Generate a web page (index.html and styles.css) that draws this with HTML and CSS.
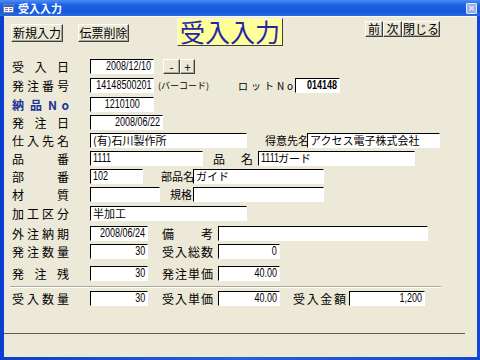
FILE: index.html
```html
<!DOCTYPE html>
<html lang="ja">

<head>
    <meta charset="UTF-8">
    <title>受入入力</title>
    <link rel="stylesheet" href="styles.css">
</head>

<body>
    <div class="window">
        <!-- タイトルバー -->
        <div class="caption">
            <svg class="caption-icon" width="11" height="9" viewBox="0 0 11 9">
                <rect x="0.5" y="0.5" width="10" height="8" fill="#fff" stroke="#6b7fa8"/>
                <rect x="1" y="1" width="9" height="2" fill="#3b64c8"/>
                <rect x="2" y="4" width="3" height="1" fill="#6b7fa8"/>
                <rect x="6" y="4" width="3" height="1" fill="#6b7fa8"/>
                <rect x="2" y="6" width="3" height="1" fill="#6b7fa8"/>
                <rect x="6" y="6" width="3" height="1" fill="#6b7fa8"/>
            </svg>
            <span class="caption-text">受入入力</span>
            <span class="caption-close">×</span>
        </div>

        <div class="client">
            <div class="head">
                <button class="btn btn-new">新規入力</button>
                <button class="btn btn-del">伝票削除</button>
                <div class="form-title">受入入力</div>
                <div class="nav">
                    <button class="btn nav-prev">前</button>
                    <button class="btn nav-next">次</button>
                    <button class="btn nav-close">閉じる</button>
                </div>
            </div>

            <div class="rows">
                <div class="row first">
                    <span class="lbl">受入日</span>
                    <span class="fld right w64"><span class="num">2008/12/10</span></span>
                    <button class="btn step minus">-</button>
                    <button class="btn step plus">+</button>
                </div>
                <div class="row loose">
                    <span class="lbl">発注番号</span>
                    <span class="fld right w64"><span class="num">14148500201</span></span>
                    <span class="note">(バーコード)</span>
                    <span class="lbl lot">ロ ッ ト N o</span>
                    <span class="fld right bold lot-no"><span class="num">014148</span></span>
                </div>
                <div class="row loose">
                    <span class="lbl blue">納 品 N o</span>
                    <span class="fld center w64"><span class="num">1210100</span></span>
                </div>
                <div class="row">
                    <span class="lbl">発注日</span>
                    <span class="fld right w73"><span class="num">2008/06/22</span></span>
                </div>
                <div class="row">
                    <span class="lbl">仕入先名</span>
                    <span class="fld w157">(有)石川製作所</span>
                    <span class="lbl2 customer">得意先名</span>
                    <span class="fld w133">アクセス電子株式会社</span>
                </div>
                <div class="row">
                    <span class="lbl">品番</span>
                    <span class="fld w113"><span class="num">1111</span></span>
                    <span class="lbl hinmei">品名</span>
                    <span class="fld w157"><span class="num pre">1111</span>ガード</span>
                </div>
                <div class="row">
                    <span class="lbl">部番</span>
                    <span class="fld w53"><span class="num">102</span></span>
                    <span class="lbl2 buhin">部品名</span>
                    <span class="fld w131">ガイド</span>
                </div>
                <div class="row">
                    <span class="lbl">材質</span>
                    <span class="fld w70"></span>
                    <span class="lbl2 kikaku">規格</span>
                    <span class="fld w131"></span>
                </div>
                <div class="row loose">
                    <span class="lbl">加工区分</span>
                    <span class="fld w157">半加工</span>
                </div>
                <div class="row looser">
                    <span class="lbl">外注納期</span>
                    <span class="fld right w58"><span class="num">2008/06/24</span></span>
                    <span class="lbl mid">備考</span>
                    <span class="fld w210"></span>
                </div>
                <div class="row">
                    <span class="lbl">発注数量</span>
                    <span class="fld right w58"><span class="num">30</span></span>
                    <span class="lbl mid">受入総数</span>
                    <span class="fld right w62"><span class="num">0</span></span>
                </div>
                <div class="row wide">
                    <span class="lbl">発注残</span>
                    <span class="fld right w58"><span class="num">30</span></span>
                    <span class="lbl mid">発注単価</span>
                    <span class="fld right w62"><span class="num">40.00</span></span>
                </div>

                <div class="sep"></div>

                <div class="row after-sep">
                    <span class="lbl">受入数量</span>
                    <span class="fld right w58"><span class="num">30</span></span>
                    <span class="lbl mid">受入単価</span>
                    <span class="fld right w62"><span class="num">40.00</span></span>
                    <span class="lbl amount">受入金額</span>
                    <span class="fld right w76"><span class="num">1,200</span></span>
                </div>
            </div>

            <div class="status"></div>
        </div>
    </div>
</body>

</html>
```

FILE: styles.css
```css
body {
    margin: 0;
    background-color: #fff;
    font-family: "Noto Sans CJK JP", sans-serif;
    font-size: 12px;
    color: #000;
}

.window {
    width: 480px;
    height: 360px;
    display: flex;
    flex-direction: column;
    background: linear-gradient(to right, #0b3fd0, #2160e0 50%, #1147d4);
}

/* タイトルバー */
.caption {
    height: 16px;
    display: flex;
    align-items: center;
    padding: 0 3px;
    background: linear-gradient(#4d8df5, #1f62e4 30%, #1658de 70%, #2a67e2);
    color: #fff;
}

.caption-icon {
    display: block;
}

.caption-text {
    margin-left: 4px;
    font-size: 11px;
    font-weight: bold;
    line-height: 16px;
}

.caption-close {
    margin-left: auto;
    width: 9px;
    height: 9px;
    border: 1px solid #dfe6f7;
    border-radius: 1px;
    background-color: #9db0e4;
    color: #fff;
    font-family: "DejaVu Sans", sans-serif;
    font-size: 9px;
    line-height: 9px;
    text-align: center;
}

.client {
    flex: 1;
    margin: 0 3px 3px 4px;
    display: flex;
    flex-direction: column;
    background-color: #ece9d8;
    border-top: 1px solid #fbfaf6;
}

/* ボタン */
.btn {
    box-sizing: border-box;
    padding: 0;
    background-color: #ece9d8;
    border: 1px solid;
    border-color: #fff #404040 #404040 #fff;
    box-shadow: inset -1px -1px #aca899;
    font-family: "Noto Sans CJK JP", sans-serif;
    font-size: 12px;
    color: #000;
    line-height: 14px;
}

.head {
    height: 34px;
    display: flex;
    align-items: flex-start;
}

.btn-new {
    width: 52px;
    height: 18px;
    margin: 7px 0 0 7px;
}

.btn-del {
    width: 51px;
    height: 18px;
    margin: 7px 0 0 15px;
}

.form-title {
    box-sizing: border-box;
    width: 106px;
    height: 28px;
    margin: 1px 0 0 48px;
    background-color: #ffff99;
    border: 1px solid;
    border-color: #f4f4f4 #404040 #404040 #f4f4f4;
    color: #2326ad;
    font-size: 25px;
    line-height: 25px;
    text-align: center;
    white-space: nowrap;
}

.nav {
    display: flex;
    margin: 4px 0 0 82px;
}

.nav .btn {
    height: 16px;
}

.nav-prev {
    width: 18px;
}

.nav-next {
    width: 19px;
}

.nav-close {
    width: 38px;
}

/* 入力行 */
.rows {
    padding-left: 8px;
}

.row {
    display: flex;
    align-items: center;
    height: 15px;
    margin-top: 3px;
}

.row.first {
    margin-top: 8px;
}

.row.loose {
    margin-top: 4px;
}

.row.looser {
    margin-top: 5px;
}

.row.wide {
    margin-top: 7px;
}

.row.after-sep {
    margin-top: 3px;
}

.lbl {
    width: 57px;
    margin-right: 21px;
    text-align: justify;
    text-align-last: justify;
    line-height: 15px;
    white-space: nowrap;
}

.lbl.blue {
    color: #1c3599;
    font-weight: bold;
}

.lbl.lot {
    width: 55px;
    margin-right: 2px;
    font-size: 10px;
}

.lbl.hinmei {
    width: 40px;
    margin: 0 5px 0 10px;
}

.lbl.mid {
    width: 51px;
    margin: 0 5px 0 14px;
}

.lbl.amount {
    width: 53px;
    margin: 0 3px 0 13px;
}

.lbl2 {
    font-size: 11px;
    line-height: 15px;
    white-space: nowrap;
    text-align: right;
}

.customer {
    width: 41px;
    margin: 0 1px 0 18px;
}

.buhin {
    width: 31px;
    margin: 0 1px 0 18px;
}

.kikaku {
    width: 22px;
    margin: 0 1px 0 10px;
}

.note {
    width: 80px;
    margin-left: 4px;
    font-size: 9px;
    line-height: 15px;
    white-space: nowrap;
}

/* テキストボックス */
.fld {
    display: flex;
    align-items: center;
    box-sizing: border-box;
    height: 15px;
    padding: 0 2px;
    overflow: hidden;
    background-color: #fff;
    border: 1px solid;
    border-color: #000 #fff #fff #000;
    font-size: 11px;
    line-height: 13px;
    white-space: nowrap;
}

.fld.right {
    justify-content: flex-end;
}

.fld.center {
    justify-content: center;
}

/* 数字は細身に */
.num {
    flex: none;
    font-family: "Liberation Sans", sans-serif;
    font-size: 12px;
    transform: scaleX(0.75);
    transform-origin: left center;
}

.num.pre {
    margin-right: -7px;
}

.fld.right .num {
    transform-origin: right center;
}

.fld.center .num {
    transform-origin: center;
}

.fld.bold .num {
    font-weight: bold;
}

.step {
    height: 15px;
}

.minus {
    width: 17px;
    margin-left: 9px;
}

.plus {
    width: 15px;
}

.lot-no {
    width: 45px;
}

.w53 { width: 53px; }
.w58 { width: 58px; }
.w62 { width: 62px; }
.w64 { width: 64px; }
.w70 { width: 70px; }
.w73 { width: 73px; }
.w76 { width: 76px; }
.w113 { width: 113px; }
.w131 { width: 131px; }
.w133 { width: 133px; }
.w157 { width: 157px; }
.w210 { width: 210px; }

.sep {
    width: 431px;
    margin: 5px 0 0 -2px;
    border-top: 1px solid #aca899;
    border-bottom: 1px solid #fff;
}

.status {
    margin-top: auto;
    width: 461px;
    height: 23px;
    border-top: 1px solid #5a5a56;
}
```
